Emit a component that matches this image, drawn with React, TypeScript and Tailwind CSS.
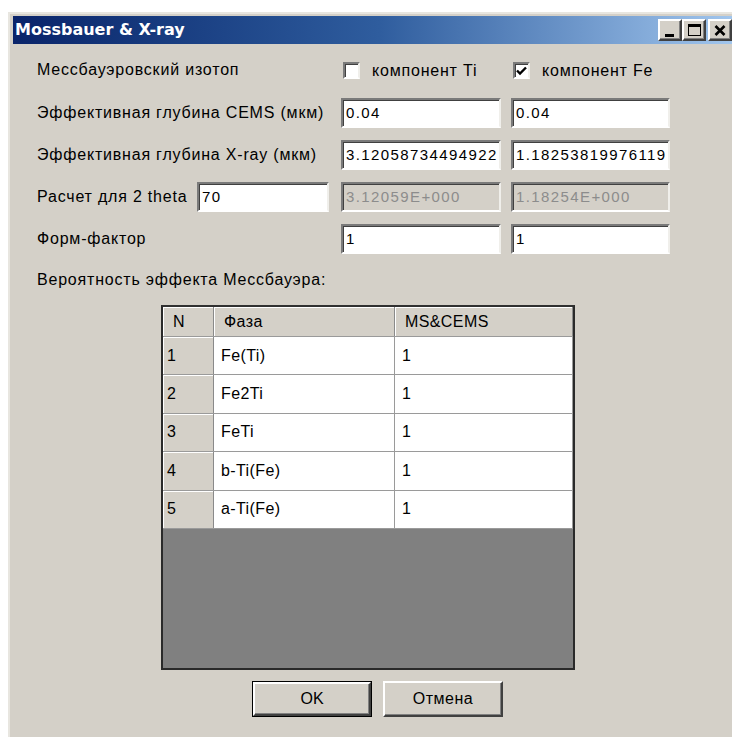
import React from 'react';

const sunken =
  'border-2 border-t-[#7a7a7a] border-l-[#7a7a7a] border-b-white border-r-[#f0efeb] shadow-[inset_1px_1px_0_#404040]';
const raised =
  'border-2 border-t-white border-l-white border-b-[#404040] border-r-[#404040] shadow-[inset_-1px_-1px_0_#808080]';

const phases = [
  { n: 1, name: 'Fe(Ti)', value: '1' },
  { n: 2, name: 'Fe2Ti', value: '1' },
  { n: 3, name: 'FeTi', value: '1' },
  { n: 4, name: 'b-Ti(Fe)', value: '1' },
  { n: 5, name: 'a-Ti(Fe)', value: '1' },
];

const Field: React.FC<{ value: string; disabled?: boolean; className?: string }> = ({
  value,
  disabled = false,
  className = '',
}) => (
  <div
    className={`h-[30px] flex items-center pl-[3px] text-[15px] tracking-[1.4px] ${sunken} ${
      disabled ? 'bg-[#d4d0c8] text-[#8c8c8c]' : 'bg-white text-black'
    } ${className}`}
  >
    {value}
  </div>
);

const CheckBox: React.FC<{ checked?: boolean; label: string }> = ({ checked = false, label }) => (
  <div className="flex items-center gap-[12px]">
    <div className={`w-[17px] h-[17px] bg-white flex items-center justify-center ${sunken}`}>
      {checked && (
        <svg width="11" height="10" viewBox="0 0 11 10">
          <path d="M1 4.5 L4 7.5 L10 1.5" stroke="#000" strokeWidth="2.4" fill="none" />
        </svg>
      )}
    </div>
    <span className="text-[16px] tracking-[0.8px]">{label}</span>
  </div>
);

const TitleButton: React.FC<{ children: React.ReactNode; className?: string }> = ({ children, className = '' }) => (
  <div className={`w-[24px] h-[22px] bg-[#d4d0c8] flex items-center justify-center ${raised} ${className}`}>
    {children}
  </div>
);

export default function App() {
  return (
    <div className="w-[732px] h-[737px] bg-white overflow-hidden pt-[12px] pl-[8px]" style={{ fontFamily: '"Liberation Sans", Arial, sans-serif' }}>
      <div className="w-[740px] h-[740px] bg-[#d4d0c8] border-t-2 border-l-2 border-t-[#e8e6e0] border-l-[#e8e6e0] p-[2px] pl-[3px]">
        {/* title bar */}
        <div className="h-[28px] flex items-center justify-between pl-[2px] pr-[14px] bg-gradient-to-r from-[#0a246a] via-[#2f5d9e] to-[#a6caf0]">
          <span
            className="text-white font-bold text-[16px]"
            style={{ fontFamily: '"DejaVu Sans", Verdana, sans-serif' }}
          >
            Mossbauer &amp; X-ray
          </span>
          <div className="flex items-center">
            <TitleButton>
              <div className="w-[9px] h-[3px] bg-black mt-[10px] -ml-[2px]" />
            </TitleButton>
            <TitleButton>
              <div className="w-[13px] h-[12px] border border-black border-t-[3px]" />
            </TitleButton>
            <TitleButton className="ml-[2px]">
              <svg width="12" height="11" viewBox="0 0 12 11">
                <path d="M1.5 1 L10.5 10 M10.5 1 L1.5 10" stroke="#000" strokeWidth="2.6" />
              </svg>
            </TitleButton>
          </div>
        </div>

        {/* body */}
        <div className="pl-[24px] pt-[11px] text-black">
          <div className="grid grid-cols-[294px_160px_159px] gap-x-[10px] gap-y-[12px] items-center">
            <div className="h-[30px] flex items-center text-[16px] tracking-[0.8px]">Мессбауэровский изотоп</div>
            <div className="pl-[2px] pt-[1px]">
              <CheckBox label="компонент Ti" />
            </div>
            <div className="pl-[2px] pt-[1px]">
              <CheckBox checked label="компонент Fe" />
            </div>

            <div className="text-[16px] tracking-[0.8px] mt-[1px]">Эффективная глубина CEMS (мкм)</div>
            <Field value="0.04" className="mt-[1px]" />
            <Field value="0.04" className="mt-[1px]" />

            <div className="text-[16px] tracking-[0.8px]">Эффективная глубина X-ray (мкм)</div>
            <Field value="3.12058734494922" />
            <Field value="1.18253819976119" />

            <div className="flex items-center">
              <span className="text-[16px] tracking-[0.8px]">Расчет для 2 theta</span>
              <Field value="70" className="w-[132px] ml-auto mr-[2px]" />
            </div>
            <Field value="3.12059E+000" disabled />
            <Field value="1.18254E+000" disabled />

            <div className="text-[16px] tracking-[0.8px]">Форм-фактор</div>
            <Field value="1" />
            <Field value="1" />
          </div>

          <div className="h-[30px] mt-[11px] flex items-center text-[16px] tracking-[0.8px]">
            Вероятность эффекта Мессбауэра:
          </div>

          {/* phase grid */}
          <div className="ml-[124px] mt-[10px] w-[414px] h-[365px] bg-[#808080] border-2 border-[#2a2a2a] border-t-[#303030] flex flex-col">
            <div className="h-[30px] flex bg-[#d4d0c8] text-[16px] tracking-[0.4px] border-b border-[#9a9a9a]">
              <div className="w-[51px] flex items-center pl-[10px] border-r border-[#8a8a8a] shadow-[inset_1px_1px_0_#fff]">N</div>
              <div className="w-[181px] flex items-center pl-[10px] border-r border-[#8a8a8a] shadow-[inset_1px_1px_0_#fff]">Фаза</div>
              <div className="flex-1 flex items-center pl-[10px] border-r border-[#8a8a8a] shadow-[inset_1px_1px_0_#fff]">
                MS&amp;CEMS
              </div>
            </div>
            {phases.map((p) => (
              <div key={p.n} className="h-[38.4px] flex text-[16px] tracking-[0.4px] border-b border-[#9a9a9a]">
                <div className="w-[51px] flex items-center pl-[4px] bg-[#d4d0c8] border-r border-[#8a8a8a] shadow-[inset_1px_1px_0_#fff]">
                  {p.n}
                </div>
                <div className="w-[181px] flex items-center pl-[7px] bg-white border-r border-[#9a9a9a]">{p.name}</div>
                <div className="flex-1 flex items-center pl-[7px] bg-white border-r border-[#9a9a9a]">{p.value}</div>
              </div>
            ))}
          </div>

          {/* dialog buttons */}
          <div className="mt-[11px] ml-[215px] flex gap-[11px]">
            <div className="w-[120px] h-[36px] border border-black">
              <div className={`w-full h-full bg-[#d4d0c8] flex items-center justify-center text-[16px] ${raised}`}>OK</div>
            </div>
            <div className={`w-[120px] h-[36px] bg-[#d4d0c8] flex items-center justify-center text-[16px] tracking-[0.5px] ${raised}`}>
              Отмена
            </div>
          </div>
        </div>
      </div>
    </div>
  );
}
